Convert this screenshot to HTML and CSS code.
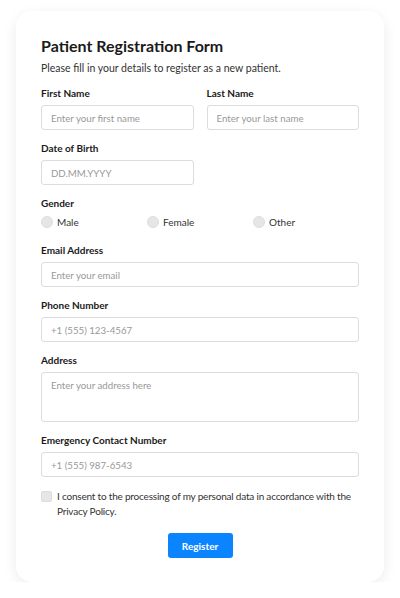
FILE: index.html
```html
<!DOCTYPE html>
<html lang="en">
<head>
    <meta charset="UTF-8">
    <meta name="viewport" content="width=device-width, initial-scale=1.0">
    <title>Patient Registration</title>
    <link rel="stylesheet" href="styles.css">
</head>
<body>
    <div class="card">
        <h1>Patient Registration Form</h1>
        <p class="intro">Please fill in your details to register as a new patient.</p>
        <form>
            <div class="row">
                <div class="group">
                    <label for="first">First Name</label>
                    <input type="text" id="first" placeholder="Enter your first name">
                </div>
                <div class="group">
                    <label for="last">Last Name</label>
                    <input type="text" id="last" placeholder="Enter your last name">
                </div>
            </div>
            <div class="row">
                <div class="group">
                    <label for="dob">Date of Birth</label>
                    <input type="text" id="dob" placeholder="DD.MM.YYYY">
                </div>
            </div>
            <div class="group">
                <label>Gender</label>
                <div class="radios">
                    <span class="opt"><span class="radio"></span>Male</span>
                    <span class="opt"><span class="radio"></span>Female</span>
                    <span class="opt"><span class="radio"></span>Other</span>
                </div>
            </div>
            <div class="group">
                <label for="email">Email Address</label>
                <input type="text" id="email" placeholder="Enter your email">
            </div>
            <div class="group">
                <label for="phone">Phone Number</label>
                <input type="text" id="phone" placeholder="+1 (555) 123-4567">
            </div>
            <div class="group">
                <label for="address">Address</label>
                <textarea id="address" placeholder="Enter your address here"></textarea>
            </div>
            <div class="group">
                <label for="emergency">Emergency Contact Number</label>
                <input type="text" id="emergency" placeholder="+1 (555) 987-6543">
            </div>
            <div class="consent">
                <span class="check"></span>
                <span>I consent to the processing of my personal data in accordance with the Privacy Policy.</span>
            </div>
            <div class="bottom">
                <button type="button" class="register">Register</button>
            </div>
        </form>
    </div>
</body>
</html>
```
FILE: styles.css
```css
*{margin:0; padding:0; box-sizing:border-box;}
body{font-family:"Lato", "Open Sans", sans-serif; background:#fff; color:#222; padding:11px 16px 0;}
.card{background:#fff; border-radius:16px; box-shadow:0 4px 14px rgba(0,0,0,0.08); padding:25px 25px 24px;}
h1{font-size:16px; font-weight:700; color:#1a1a1a; line-height:20px;}
.intro{font-size:10.5px; line-height:14px; margin-top:5px; color:#333;}
form{display:flex; flex-direction:column; gap:12px; margin-top:12px;}
.row{display:grid; grid-template-columns:1fr 1fr; gap:13px;}
.group{display:flex; flex-direction:column;}
label{font-size:10px; font-weight:700; line-height:13px; margin-bottom:5px; color:#1a1a1a;}
input, textarea{font-family:inherit; font-size:9.7px; height:25px; padding:0 9px; border:1px solid #dcdcdc; border-radius:3px; color:#333; outline:0; background:#fff;}
textarea{height:50px; padding:6px 9px; resize:none;}
input::placeholder, textarea::placeholder{color:#999;}
.radios{display:grid; grid-template-columns:repeat(3, 1fr); height:14px; margin-bottom:3px;}
.opt{display:flex; align-items:center; gap:4px; font-size:10px; color:#333;}
.radio{width:12px; height:12px; border-radius:50%; background:#e6e6e6; border:1px solid #dddddd;}
.consent{display:flex; align-items:flex-start; gap:5px; font-size:10px; letter-spacing:-0.2px; line-height:15px; color:#333;}
.check{flex:none; width:11px; height:11px; border-radius:2px; background:#e6e6e6; border:1px solid #dddddd; margin-top:2px;}
.bottom{display:flex; justify-content:center; margin-top:2px;}
.register{background:#0a84ff; color:#fff; font-family:inherit; font-weight:700; font-size:10px; width:65px; height:25px; border:none; border-radius:3px; cursor:pointer;}
```
